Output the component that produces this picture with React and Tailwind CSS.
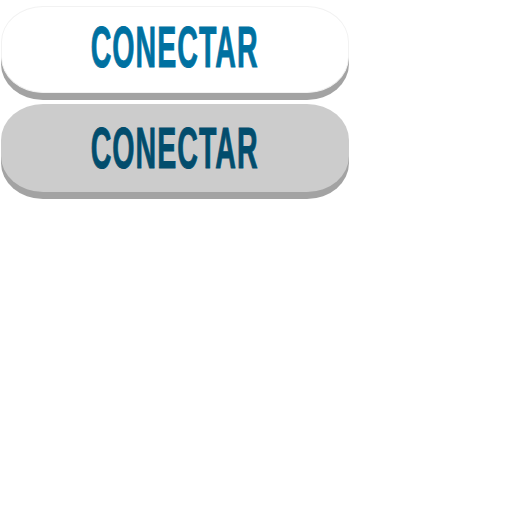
export default function App() {
  return (
    <div className="min-h-screen bg-white" style={{ fontFamily: '"Liberation Sans", Arial, sans-serif' }}>
      <div className="flex w-[349px] flex-col gap-[4px] pl-[1px] pt-[6px]">
        <button className="flex h-[87px] items-center justify-center rounded-[42px/36px] border border-[#f2f2f2] bg-white shadow-[0_7px_0_#a3a3a3]">
          <span className="inline-block -translate-y-[2px] scale-x-[0.51] scale-y-[1.02] text-[56px] font-bold leading-none tracking-[2px] text-[#0071a1] [-webkit-text-stroke:1px_#0071a1]">
            CONECTAR
          </span>
        </button>
        <button className="mt-[7px] flex h-[88px] items-center justify-center rounded-[42px/36px] bg-[#cccccc] shadow-[0_7px_0_#a3a3a3]">
          <span className="inline-block translate-y-[1px] scale-x-[0.51] scale-y-[1.02] text-[56px] font-bold leading-none tracking-[2px] text-[#024d6d] [-webkit-text-stroke:1px_#024d6d]">
            CONECTAR
          </span>
        </button>
      </div>
    </div>
  )
}
